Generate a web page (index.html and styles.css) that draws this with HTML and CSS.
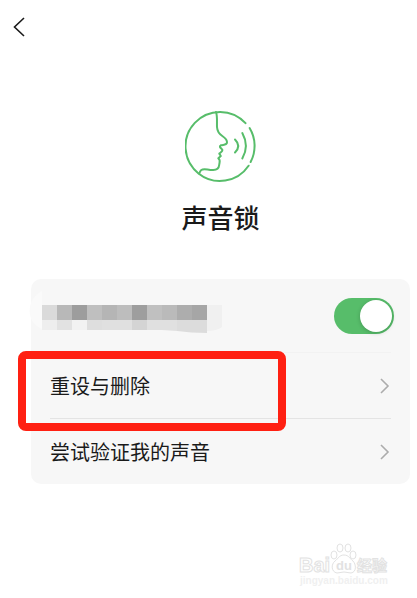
FILE: index.html
```html
<!DOCTYPE html>
<html lang="zh-CN">
<head>
  <meta charset="UTF-8" />
  <meta name="viewport" content="width=device-width, initial-scale=1.0"/>
  <title>声音锁</title>
  <link rel="stylesheet" href="styles.css">
</head>
<body>
  <header class="topbar">
    <button class="back" type="button" aria-label="返回">
      <svg width="12" height="20" viewBox="0 0 12 20"><path d="M11 1 1.5 10 11 19"/></svg>
    </button>
  </header>

  <main>
    <section class="hero">
      <svg class="voice-icon" width="72" height="72" viewBox="0 0 72 72">
        <path d="M60.5 13.2A34.5 34.5 0 1 0 63.6 55.7"/>
        <path d="M64.6 18A34.5 34.5 0 0 1 65.6 52"/>
        <path d="M31 2C32.5 6 31.8 11 32 17C32.3 22 34.3 24 37.3 26C40.3 28 42.3 30.5 42 32.8C41.4 35.4 38 34.5 35.8 35.3C33.5 36.5 36 38 37.2 39.5C38.1 41.2 36.3 42 34.3 43.6L35.8 46L33.3 48.3C36 50 34.3 52.5 34.2 55C33.9 58 31.5 60.2 27.5 60C22.5 60 19 58 16.3 60C15.1 61 14.8 62 14.2 63.5"/>
        <path d="M50 29.5Q56.5 36 50 42.5"/>
        <path d="M57.3 23Q64.5 36 57.3 48.5"/>
      </svg>
      <h1>声音锁</h1>
    </section>

    <section class="card">
      <div class="row row-switch">
        <svg class="mosaic" width="194" height="40" viewBox="0 0 194 40" aria-hidden="true">
          <path class="m-smudge" d="M13 0C-3 8-4 31 13 38z"/>
          <path fill="#f0f0f0" d="M178 14h15v22q-5 4-15 4z"/>
          <path fill="#dadada" d="M13 14h15v15H13z"/>
          <path fill="#b8b8b8" d="M28 14h15v15H28z"/>
          <path fill="#9d9d9d" d="M43 14h15v15H43z"/>
          <path fill="#bfbfbf" d="M58 14h15v15H58z"/>
          <path fill="#b5b5b5" d="M73 14h15v15H73z"/>
          <path fill="#bdbdbd" d="M88 14h15v15H88z"/>
          <path fill="#9e9e9e" d="M103 14h15v15h-15z"/>
          <path fill="#c0c0c0" d="M118 14h15v15h-15z"/>
          <path fill="#bababa" d="M133 14h15v15h-15z"/>
          <path fill="#adadad" d="M148 14h15v15h-15z"/>
          <path fill="#a6a6a6" d="M163 14h15v15h-15z"/>
          <path fill="#eeeeee" d="M13 29h15v10H13z"/>
          <path fill="#e2e2e2" d="M28 29h15v10H28z"/>
          <path fill="#f2f2f2" d="M43 29h15v10H43z"/>
          <path fill="#dedede" d="M58 29h15v10H58z"/>
          <path fill="#e0e0e0" d="M73 29h30v10H73z"/>
          <path fill="#d4d4d4" d="M103 29h15v10h-15z"/>
          <path fill="#e0e0e0" d="M118 29h30v11l-15-1h-15z"/>
          <path fill="#dcdcdc" d="M148 29h30v13q-16 0-30-2z"/>
        </svg>
        <input class="switch" type="checkbox" role="switch" aria-label="声音锁" checked>
      </div>
      <a class="row row-reset" href="#reset">
        <span>重设与删除</span>
        <svg class="arrow" width="12" height="16" viewBox="0 0 12 16"><path d="M2 1 9 8l-7 7"/></svg>
      </a>
      <a class="row row-try" href="#try">
        <span>尝试验证我的声音</span>
        <svg class="arrow" width="12" height="16" viewBox="0 0 12 16"><path d="M2 1 9 8l-7 7"/></svg>
      </a>
    </section>
  </main>

  <footer class="watermark">
    <svg width="94" height="47" viewBox="0 0 94 47">
      <text class="wm-bai" x="1" y="29">Bai</text>
      <g class="wm-paw">
        <ellipse cx="36" cy="12" rx="3" ry="4"/>
        <ellipse cx="42" cy="5" rx="3" ry="4"/>
        <ellipse cx="50" cy="5" rx="3" ry="4"/>
        <ellipse cx="55" cy="12" rx="3" ry="4"/>
        <path d="M46 12C41 12 40 16 37 18C33 21 33 29 39 30Q46 28 53 30C59 29 58 21 55 18C52 16 51 12 46 12z"/>
      </g>
      <text class="wm-du" x="38" y="27">du</text>
      <text class="wm-cn" x="59" y="28">经验</text>
      <text class="wm-url" x="2" y="41">jingyan.baidu.com</text>
    </svg>
  </footer>
</body>
</html>
```
FILE: styles.css
```css
*,
*::before,
*::after {
  box-sizing: border-box;
}

body {
  margin: 0;
  background: #fff;
  color: #1a1a1a;
  font-family: "Noto Sans CJK SC", sans-serif;
}

svg {
  display: block;
  flex: none;
}

.topbar {
  display: flex;
  align-items: center;
  height: 54px;
  padding-left: 5px;
}

.back {
  display: flex;
  padding: 8px;
  border: 0;
  background: none;
  cursor: pointer;
}

.back path {
  fill: none;
  stroke: #1a1a1a;
  stroke-width: 1.6;
}

main {
  padding: 56px 7px 0 31px;
}

.hero {
  display: flex;
  flex-direction: column;
  align-items: center;
  gap: 17px;
}

.voice-icon path {
  fill: none;
  stroke: #57bd6a;
  stroke-width: 2;
  stroke-linecap: round;
  stroke-linejoin: round;
}

h1 {
  margin: 0;
  font-size: 26px;
  line-height: 36px;
  font-weight: 500;
}

/* Settings card */
.card {
  margin-top: 44px;
  border-radius: 10px;
  background: #f7f7f7;
}

.row {
  position: relative;
  display: flex;
  align-items: center;
  justify-content: space-between;
  height: 66px;
  padding: 0 19px;
  color: inherit;
  font-size: 20px;
  line-height: 28px;
  text-decoration: none;
}

.row-switch {
  height: 74px;
  padding-right: 16px;
  justify-content: flex-end;
}

/* divider lines */
.row-switch::after,
.row-reset::before {
  content: '';
  position: absolute;
  left: 19px;
  right: 19px;
  bottom: 0;
  height: 1px;
  background: #f2f2f2;
}

.row-reset::before {
  background: #e4e4e4;
}

/* red frame over the reset row */
.row-reset::after {
  content: '';
  position: absolute;
  z-index: 1;
  top: -2px;
  left: -13px;
  width: 268px;
  height: 80px;
  border: 8px solid #ff2012;
  border-radius: 8px;
}

.row-try {
  height: 65px;
}

.arrow path {
  fill: none;
  stroke: #acacac;
  stroke-width: 1.6;
}

.mosaic {
  position: absolute;
  left: -2px;
  top: 12px;
  overflow: visible;
}

.m-smudge {
  fill: #fafafa;
}

.switch {
  appearance: none;
  display: flex;
  width: 60px;
  height: 36px;
  margin: 0;
  padding: 2px;
  border-radius: 18px;
  background: #ccc;
  cursor: pointer;
}

.switch::before {
  content: '';
  width: 32px;
  height: 32px;
  border-radius: 50%;
  background: #fff;
  box-shadow: 0 1px 4px rgba(0, 0, 0, 0.2);
}

.switch:checked {
  justify-content: flex-end;
  background: #57bd6a;
}

/* Watermark */
.watermark {
  display: flex;
  justify-content: flex-end;
  padding: 59px 25px 0 0;
}

.watermark text,
.wm-paw {
  fill: #fff;
  stroke: #e2e2e2;
  stroke-width: 1;
}

.wm-bai,
.wm-du,
.wm-url {
  font-family: "Liberation Sans", sans-serif;
  font-weight: bold;
}

.wm-bai {
  font-size: 20px;
}

.watermark .wm-du {
  font-size: 13px;
  fill: #e2e2e2;
  stroke: none;
}

.wm-cn {
  font-size: 15px;
  font-weight: bold;
}

.watermark .wm-url {
  font-size: 10px;
  fill: #f0f0f0;
  stroke: none;
}
```
